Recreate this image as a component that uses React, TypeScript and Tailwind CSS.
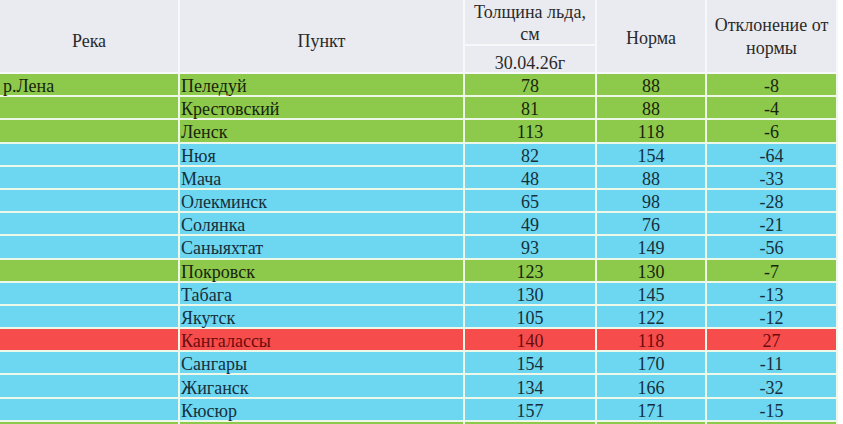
import React from "react";

type Row = { river: string; point: string; ice: string; norm: string; dev: string; c: "g" | "b" | "r" };

const rows: Row[] = [
  { river: "р.Лена", point: "Пеледуй", ice: "78", norm: "88", dev: "-8", c: "g" },
  { river: "", point: "Крестовский", ice: "81", norm: "88", dev: "-4", c: "g" },
  { river: "", point: "Ленск", ice: "113", norm: "118", dev: "-6", c: "g" },
  { river: "", point: "Нюя", ice: "82", norm: "154", dev: "-64", c: "b" },
  { river: "", point: "Мача", ice: "48", norm: "88", dev: "-33", c: "b" },
  { river: "", point: "Олекминск", ice: "65", norm: "98", dev: "-28", c: "b" },
  { river: "", point: "Солянка", ice: "49", norm: "76", dev: "-21", c: "b" },
  { river: "", point: "Саныяхтат", ice: "93", norm: "149", dev: "-56", c: "b" },
  { river: "", point: "Покровск", ice: "123", norm: "130", dev: "-7", c: "g" },
  { river: "", point: "Табага", ice: "130", norm: "145", dev: "-13", c: "b" },
  { river: "", point: "Якутск", ice: "105", norm: "122", dev: "-12", c: "b" },
  { river: "", point: "Кангалассы", ice: "140", norm: "118", dev: "27", c: "r" },
  { river: "", point: "Сангары", ice: "154", norm: "170", dev: "-11", c: "b" },
  { river: "", point: "Жиганск", ice: "134", norm: "166", dev: "-32", c: "b" },
  { river: "", point: "Кюсюр", ice: "157", norm: "171", dev: "-15", c: "b" },
  { river: "", point: "", ice: "", norm: "", dev: "", c: "g" },
];

const bg = { g: "bg-[#8dca4c]", b: "bg-[#6dd6f0]", r: "bg-[#f74c4c]" };
const fg = { g: "text-[#18240c]", b: "text-[#15303c]", r: "text-[#6a0c0c]" };

export default function App() {
  return (
    <div className="w-[843px] h-[424px] overflow-hidden bg-white [font-family:'Liberation_Serif',serif] text-[18px] leading-none">
      <div className="w-[838px]">
        {/* Header */}
        <div className="grid grid-cols-[180px_285px_132px_110px_131px] grid-rows-[46px_28px] h-[74px] bg-[#f4f5f8] text-[#2a2a2a]">
          <div className="row-span-2 border-r-2 border-b-2 border-[#f7f8fa] bg-[#eaebf0] flex items-center justify-center pt-[10px]">Река</div>
          <div className="row-span-2 border-r-2 border-b-2 border-[#f7f8fa] bg-[#eaebf0] flex items-center justify-center pt-[10px]">Пункт</div>
          <div className="border-r-2 border-b-2 border-[#f7f8fa] bg-[#eaebf0] flex flex-col items-center justify-center text-center leading-[22px] pt-[2px]">
            <span>Толщина льда,</span>
            <span>см</span>
          </div>
          <div className="row-span-2 border-r-2 border-b-2 border-[#f7f8fa] bg-[#eaebf0] flex items-center justify-center pt-[4px]">Норма</div>
          <div className="row-span-2 border-r-2 border-b-2 border-[#f7f8fa] bg-[#eaebf0] flex flex-col items-center justify-center text-center leading-[23px] pt-[1px]">
            <span>Отклонение от</span>
            <span>нормы</span>
          </div>
          <div className="border-r-2 border-b-2 border-[#f7f8fa] bg-[#eaebf0] flex items-center justify-center pt-[8px]">30.04.26г</div>
        </div>
        {/* Body */}
        {rows.map((r, i) => (
          <div
            key={i}
            className={`grid grid-cols-[180px_285px_132px_110px_131px] h-[23.2px] ${fg[r.c]}`}
          >
            <div className={`${bg[r.c]} border-r-2 border-b-2 border-[#eef8e8] flex items-center pl-[3px] pt-[3px]`}>{r.river}</div>
            <div className={`${bg[r.c]} border-r-2 border-b-2 border-[#eef8e8] flex items-center pl-[1px] pt-[3px]`}>{r.point}</div>
            <div className={`${bg[r.c]} border-r-2 border-b-2 border-[#eef8e8] flex items-center justify-center pt-[3px]`}>{r.ice}</div>
            <div className={`${bg[r.c]} border-r-2 border-b-2 border-[#eef8e8] flex items-center justify-center pt-[3px]`}>{r.norm}</div>
            <div className={`${bg[r.c]} border-r-2 border-b-2 border-[#eef8e8] flex items-center justify-center pt-[3px]`}>{r.dev}</div>
          </div>
        ))}
      </div>
    </div>
  );
}
